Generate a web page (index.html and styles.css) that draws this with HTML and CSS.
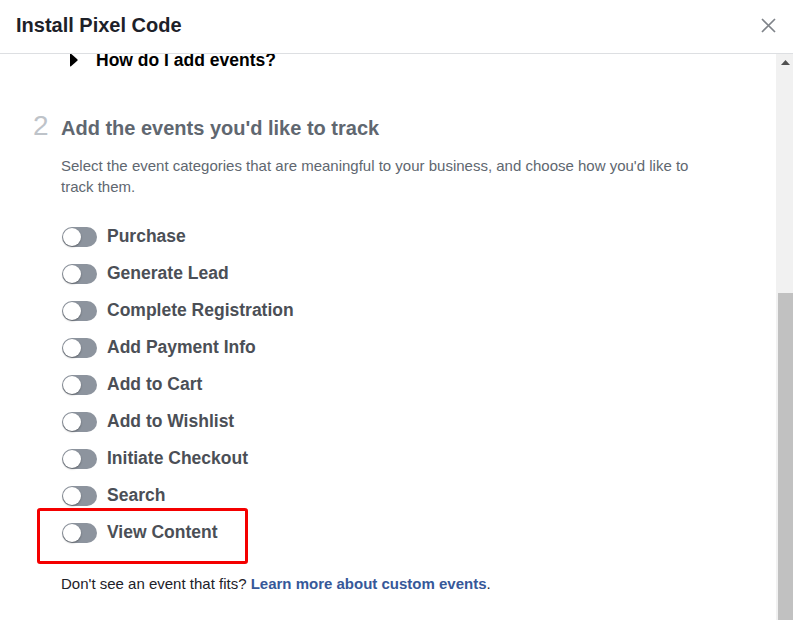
FILE: index.html
```html
<!DOCTYPE html>
<html>
<head>
<meta charset="utf-8">
<link rel="stylesheet" href="styles.css">
</head>
<body>
<div class="dialog">
  <header class="dlg-header">
    <h1 class="dlg-title">Install Pixel Code</h1>
    <button class="close" aria-label="Close">
      <svg width="15" height="15" viewBox="0 0 15 15"><path d="M1 1L14 14M14 1L1 14" stroke="#7f8389" stroke-width="1.7" fill="none"/></svg>
    </button>
  </header>
  <div class="dlg-body">
    <div class="viewport">
      <div class="scroll-content">
        <div class="faq">
          <svg class="caret" width="9" height="14" viewBox="0 0 9 14"><path d="M1 1.2Q1 0 2 0.7L8.3 6.2Q9 7 8.3 7.8L2 13.3Q1 14 1 12.8Z" fill="#000"/></svg>
          <span class="faq-text">How do I add events?</span>
        </div>
        <section class="step">
          <div class="step-head">
            <span class="step-num">2</span>
            <h2 class="step-title">Add the events you'd like to track</h2>
          </div>
          <p class="step-desc">Select the event categories that are meaningful to your business, and choose how you'd like to track them.</p>
          <ul class="events">
            <li class="event"><span class="toggle"><span class="knob"></span></span><span class="ev-label">Purchase</span></li>
            <li class="event"><span class="toggle"><span class="knob"></span></span><span class="ev-label">Generate Lead</span></li>
            <li class="event"><span class="toggle"><span class="knob"></span></span><span class="ev-label">Complete Registration</span></li>
            <li class="event"><span class="toggle"><span class="knob"></span></span><span class="ev-label">Add Payment Info</span></li>
            <li class="event"><span class="toggle"><span class="knob"></span></span><span class="ev-label">Add to Cart</span></li>
            <li class="event"><span class="toggle"><span class="knob"></span></span><span class="ev-label">Add to Wishlist</span></li>
            <li class="event"><span class="toggle"><span class="knob"></span></span><span class="ev-label">Initiate Checkout</span></li>
            <li class="event"><span class="toggle"><span class="knob"></span></span><span class="ev-label">Search</span></li>
            <li class="highlight">
              <div class="event"><span class="toggle"><span class="knob"></span></span><span class="ev-label">View Content</span></div>
            </li>
          </ul>
          <p class="footer-note">Don't see an event that fits? <a href="#" class="link">Learn more about custom events</a>.</p>
        </section>
      </div>
    </div>
    <div class="scrollbar">
      <div class="sb-up"><svg width="9" height="5" viewBox="0 0 9 5"><path d="M0 5L4.5 0L9 5Z" fill="#505050"/></svg></div>
      <div class="sb-space"></div>
      <div class="sb-thumb"></div>
    </div>
  </div>
</div>
</body>
</html>
```

FILE: styles.css
```css
* { box-sizing: border-box; }
html, body { margin: 0; padding: 0; }
body {
  width: 793px;
  height: 620px;
  overflow: hidden;
  background: #fff;
  font-family: "Liberation Sans", Arial, Helvetica, sans-serif;
  color: #1d2129;
}
.dialog {
  display: flex;
  flex-direction: column;
  height: 620px;
}
.dlg-header {
  height: 54px;
  flex: none;
  display: flex;
  align-items: center;
  justify-content: space-between;
  padding: 0 17px 0 16px;
  border-bottom: 1px solid #dddfe2;
}
.dlg-title {
  margin: 0;
  font-size: 20px;
  font-weight: bold;
  color: #1d2129;
  padding-bottom: 3px;
}
.close {
  border: 0;
  background: none;
  padding: 0;
  width: 15px;
  height: 15px;
  display: flex;
  margin-bottom: 2px;
}
.dlg-body {
  flex: 1;
  display: flex;
  min-height: 0;
}
.viewport {
  flex: 1;
  overflow: hidden;
}
.scroll-content {
  margin-top: -8px;
}
.faq {
  display: flex;
  align-items: center;
  padding-left: 69px;
  height: 28px;
}
.caret { display: block; }
.faq-text {
  margin-left: 18px;
  font-size: 17.5px;
  font-weight: bold;
  color: #000;
}
.step {
  padding: 0 0 0 33px;
}
.step-head {
  display: flex;
  align-items: baseline;
  margin-top: 36px;
}
.step-num {
  width: 28px;
  font-size: 28px;
  color: #bec3c9;
  line-height: 32px;
}
.step-title {
  margin: 0;
  font-size: 20px;
  font-weight: bold;
  color: #606770;
}
.step-desc {
  margin: 13px 0 0 28px;
  width: 640px;
  font-size: 15px;
  line-height: 21px;
  color: #606770;
}
.events {
  list-style: none;
  margin: 21px 0 0 0;
  padding: 0;
}
.event {
  display: flex;
  align-items: center;
  height: 37px;
  padding-left: 29px;
}
.highlight {
  margin: -6px 0 0 4px;
  width: 211px;
  border: 3px solid #f40000;
  border-radius: 3px;
  padding: 3px 0 10px 0;
}
.highlight .event {
  padding-left: 22px;
}
.toggle {
  width: 35px;
  height: 20px;
  border-radius: 10px;
  background: #8d949e;
  position: relative;
  flex: none;
}
.knob {
  position: absolute;
  left: 1px;
  top: 1px;
  width: 18px;
  height: 18px;
  border-radius: 50%;
  background: #fff;
  box-shadow: 0 1px 2px rgba(0,0,0,0.35);
}
.ev-label {
  margin-left: 10px;
  font-size: 17.5px;
  font-weight: bold;
  color: #4b4f56;
  white-space: nowrap;
}
.footer-note {
  margin: 11px 0 0 28px;
  font-size: 15px;
  color: #1d2129;
}
.link {
  color: #365899;
  font-weight: bold;
  text-decoration: none;
}
.scrollbar {
  width: 17px;
  flex: none;
  background: #f1f1f1;
  display: flex;
  flex-direction: column;
}
.sb-up {
  height: 17px;
  display: flex;
  align-items: center;
  justify-content: center;
  padding-left: 2px;
}
.sb-space { height: 222px; flex: none; }
.sb-thumb {
  flex: 1;
  margin-left: 2px;
  background: #c1c1c1;
}
```
